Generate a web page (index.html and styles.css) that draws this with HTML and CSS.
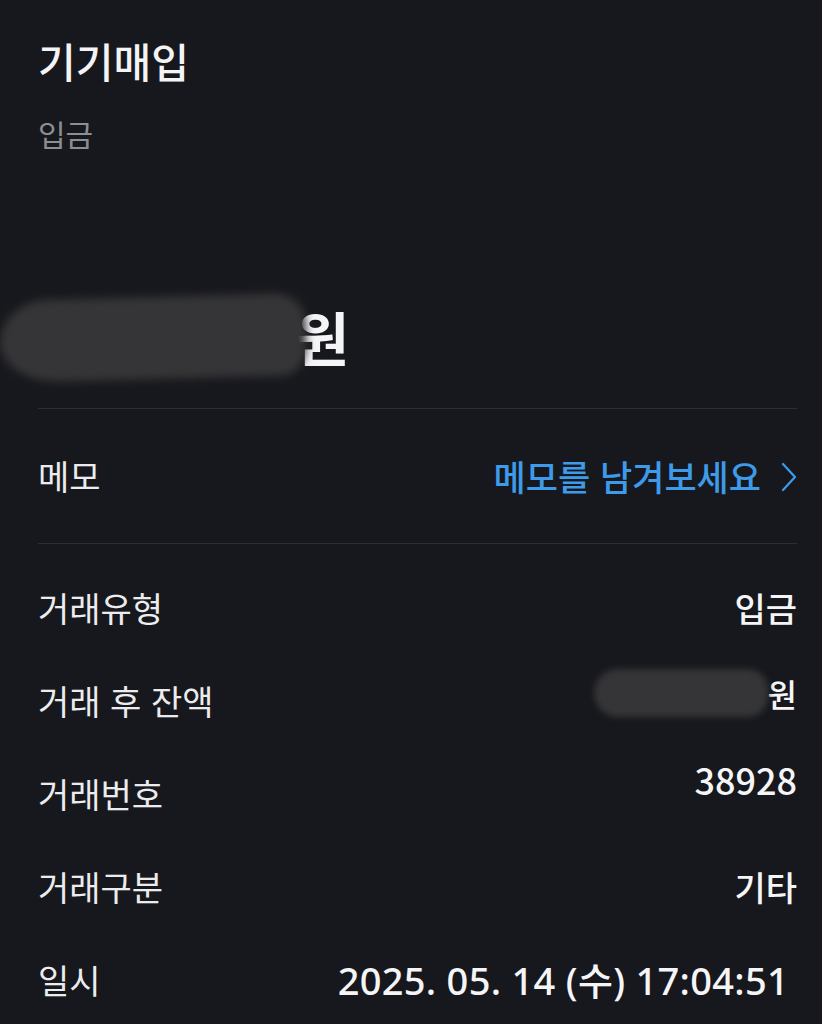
FILE: index.html
```html
<!DOCTYPE html>
<html lang="ko">
<head>
<meta charset="utf-8">
<link rel="stylesheet" href="styles.css">
</head>
<body>
<div class="page">
  <header class="head">
    <h1 class="title">기기매입</h1>
    <div class="sub">입금</div>
  </header>
  <div class="amount">
    <span class="smudge big"></span><span class="won-big">원</span>
  </div>
  <div class="rule"></div>
  <div class="memo">
    <span class="label">메모</span>
    <span class="memo-link">메모를 남겨보세요
      <svg class="chev" viewBox="0 0 16 30" width="16" height="30"><path d="M2 2 L14 15 L2 28" fill="none" stroke="#3d9be9" stroke-width="2.2" stroke-linecap="round" stroke-linejoin="round"/></svg>
    </span>
  </div>
  <div class="rule"></div>
  <div class="details">
    <div class="row"><span class="label">거래유형</span><span class="value">입금</span></div>
    <div class="row"><span class="label">거래 후 잔액</span><span class="value up1"><span class="smudge small"></span><span class="won-small">원</span></span></div>
    <div class="row"><span class="label">거래번호</span><span class="value up2">38928</span></div>
    <div class="row"><span class="label">거래구분</span><span class="value">기타</span></div>
    <div class="row"><span class="label">일시</span><span class="value date">2025. 05. 14 (수) 17:04:51</span></div>
  </div>
</div>
</body>
</html>
```

FILE: styles.css
```css
html, body {
  margin: 0;
  padding: 0;
  background: #17181d;
}
body {
  font-family: "Noto Sans CJK KR", "Noto Sans", sans-serif;
  color: #f2f2f4;
  width: 822px;
  height: 1024px;
  overflow: hidden;
}
.page {
  padding: 0 25px 0 38px;
}
.head {
  padding-top: 31px;
}
.title {
  margin: 0;
  font-size: 41px;
  font-weight: 500;
  line-height: 58px;
  color: #f4f4f6;
}
.sub {
  margin-top: 24px;
  font-size: 30px;
  line-height: 40px;
  color: #8d8e93;
}
.amount {
  margin-top: 133px;
  margin-left: -38px;
  height: 100px;
  display: flex;
  align-items: center;
}
.smudge {
  display: inline-block;
  background: #353537;
  filter: blur(4px);
}
.smudge.big {
  width: 306px;
  height: 82px;
  border-radius: 50px 30px 26px 60px / 44px 30px 30px 40px;
  transform: rotate(-1.5deg);
  margin-top: 4px;
}
.won-big {
  font-size: 58px;
  font-weight: 700;
  color: #f5f5f7;
  line-height: 64px;
  margin-left: -10px;
}
.rule {
  height: 1px;
  background: #2d2e34;
}
.amount + .rule {
  margin-top: 22px;
}
.memo {
  height: 134px;
  display: flex;
  justify-content: space-between;
  align-items: center;
}
.label {
  font-size: 34px;
  line-height: 44px;
  color: #ececee;
}
.memo-link {
  display: flex;
  align-items: center;
  gap: 20px;
  font-size: 35px;
  line-height: 44px;
  font-weight: 500;
  color: #3d9be9;
}
.chev {
  margin-top: 2px;
}
.details {
  padding-top: 42px;
  display: flex;
  flex-direction: column;
  gap: 49px;
}
.row {
  display: flex;
  justify-content: space-between;
  align-items: center;
  height: 44px;
}
.value {
  font-size: 34px;
  line-height: 44px;
  font-weight: 500;
  color: #f5f5f7;
}
.value.up1 {
  display: flex;
  align-items: center;
  transform: translateY(-8px);
}
.value.up2 {
  font-size: 36px;
  transform: translateY(-15px);
}
.smudge.small {
  width: 174px;
  height: 48px;
  border-radius: 26px 22px 22px 26px;
  filter: blur(3px);
  margin-right: 0;
}
.won-small {
  font-size: 32px;
}
.date {
  font-family: "Noto Sans", "Noto Sans CJK KR", sans-serif;
  font-size: 38px;
  letter-spacing: 0.3px;
  margin-right: 8px;
}
```
